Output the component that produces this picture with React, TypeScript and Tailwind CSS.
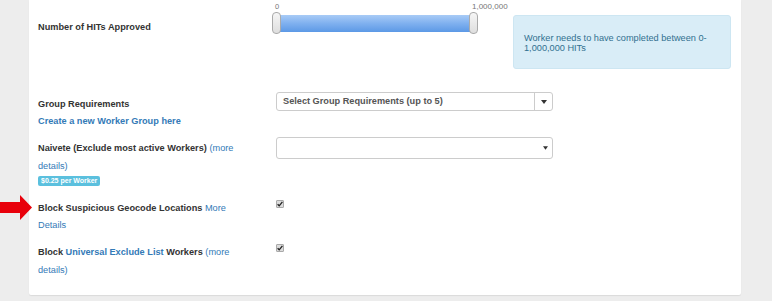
import React from "react";

const font = { fontFamily: '"Liberation Sans", Arial, Helvetica, sans-serif' };

function Caret({ small }: { small?: boolean }) {
  return (
    <svg width={small ? 5 : 6} height={small ? 4 : 4} viewBox="0 0 6 4" className="block">
      <polygon points="0,0 6,0 3,4" fill="#333" />
    </svg>
  );
}

function CheckBox() {
  return (
    <div className="w-[8px] h-[8px] rounded-[1px] border border-[#a9a9a9] bg-[#dcdcdc] flex items-center justify-center">
      <svg width="6" height="6" viewBox="0 0 6 6" className="block">
        <path d="M0.6 3.2 L2.2 4.8 L5.4 0.8" stroke="#222" strokeWidth="1.3" fill="none" />
      </svg>
    </div>
  );
}

export default function App() {
  return (
    <div
      className="relative w-[772px] h-[301px] bg-[#ededed] overflow-hidden text-[9.2px] leading-[17.5px] text-[#333]"
      style={font}
    >
      {/* red annotation arrow */}
      <svg className="absolute left-0 top-[195px]" width="33" height="26" viewBox="0 0 33 26">
        <polygon points="0,7 20,7 20,0 32,12.5 20,25 20,18 0,18" fill="#e8000b" />
      </svg>

      <div className="ml-[29px] w-[712px] h-[295px] bg-white rounded-b-[2px] shadow-[0_1px_1px_rgba(0,0,0,0.08)] pl-[9px]">
        {/* Row 1: HITs approved */}
        <div className="flex items-start">
          <div className="w-[238px] pr-[32px] pt-[18.5px] font-bold">Number of HITs Approved</div>
          <div className="relative ml-[-4px] w-[241px] h-[36px]">
            <span className="absolute left-[3px] top-[2px] text-[7.5px] leading-[9px] text-[#777]">0</span>
            <span className="absolute left-[200px] top-[2px] text-[8px] leading-[9px] text-[#777]">1,000,000</span>
            <div className="absolute left-[4px] top-[15px] w-[197px] h-[16.5px] bg-gradient-to-b from-[#a8cbf6] via-[#7fb0ef] to-[#5c99e6]" />
            <div className="absolute left-0 top-[12px] w-[9px] h-[22px] rounded-[4px] border border-[#aaa] bg-gradient-to-b from-[#f6f6f6] to-[#dedede]" />
            <div className="absolute left-[197px] top-[12px] w-[9px] h-[22px] rounded-[4px] border border-[#aaa] bg-gradient-to-b from-[#f6f6f6] to-[#dedede]" />
          </div>
          <div className="mt-[15px] w-[218px] h-[54px] rounded-[3px] bg-[#d9edf7] border border-[#cde6f2] text-[#31708f] leading-[10.3px] pl-[10px] pr-[6px] pt-[17px]">
            Worker needs to have completed between 0-1,000,000 HITs
          </div>
        </div>

        {/* Row 2: Group requirements */}
        <div className="flex items-start mt-[23px]">
          <div className="w-[238px] pr-[32px] pt-[3.5px] font-bold">
            <div>Group Requirements</div>
            <div className="text-[#337ab7]">Create a new Worker Group here</div>
          </div>
          <div className="flex w-[277px] h-[19px] rounded-[3px] border border-[#ccc] bg-white">
            <div className="flex-1 flex items-center pl-[6px] font-bold text-[#555] leading-none border-r border-[#ccc]">
              Select Group Requirements (up to 5)
            </div>
            <div className="w-[17px] flex items-center justify-center">
              <Caret />
            </div>
          </div>
        </div>

        {/* Row 3: Naivete */}
        <div className="flex items-start mt-[6.5px]">
          <div className="w-[238px] pr-[32px] pt-[3px]">
            <div>
              <span className="font-bold">Naivete (Exclude most active Workers)</span>{" "}
              <span className="text-[#337ab7]">(more details)</span>
            </div>
            <div className="mt-[1px] w-fit flex items-center h-[9.5px] px-[3px] rounded-[2px] bg-[#5bc0de] text-white font-bold text-[7px] leading-none">
              $0.25 per Worker
            </div>
          </div>
          <div className="flex items-center justify-end w-[277px] h-[22px] rounded-[3px] border border-[#ccc] bg-white pr-[4px]">
            <Caret small />
          </div>
        </div>

        {/* Row 4: Geocode */}
        <div className="flex items-start mt-[14px]">
          <div className="w-[238px] pr-[32px]">
            <span className="font-bold">Block Suspicious Geocode Locations</span>{" "}
            <span className="text-[#337ab7]">More Details</span>
          </div>
          <div>
            <CheckBox />
          </div>
        </div>

        {/* Row 5: Universal exclude list */}
        <div className="flex items-start mt-[9.5px]">
          <div className="w-[238px] pr-[32px]">
            <span className="font-bold">
              Block <span className="text-[#337ab7]">Universal Exclude List</span> Workers
            </span>{" "}
            <span className="text-[#337ab7]">(more details)</span>
          </div>
          <div>
            <CheckBox />
          </div>
        </div>
      </div>
    </div>
  );
}
